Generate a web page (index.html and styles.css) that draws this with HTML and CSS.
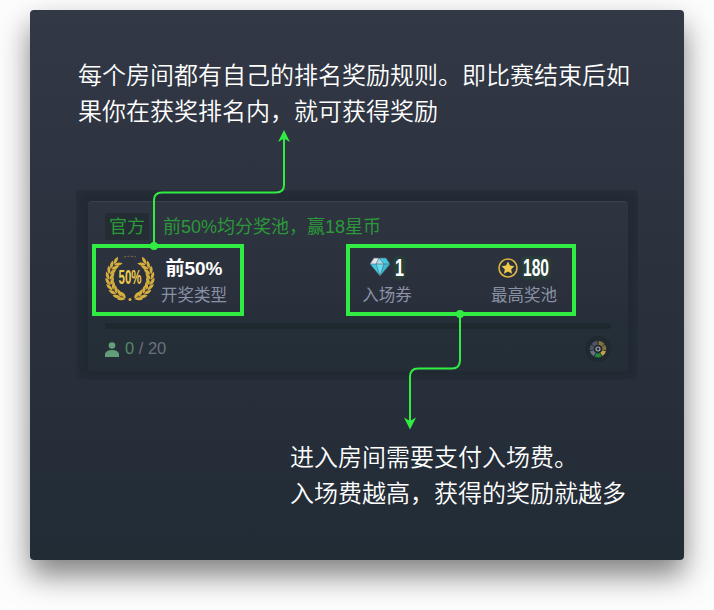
FILE: index.html
```html
<!DOCTYPE html>
<html lang="zh-CN">
<head>
<meta charset="utf-8">
<title>房间奖励规则</title>
<link rel="stylesheet" href="styles.css">
</head>
<body>
<main class="stage">
  <p class="note">每个房间都有自己的排名奖励规则。即比赛结束后如<br>果你在获奖排名内，就可获得奖励</p>

  <section class="halo">
    <div class="card">
      <div class="title-row">
        <span class="tag">官方</span>
        <span class="title">前50%均分奖池，赢18星币</span>
      </div>
      <div class="stats">
        <svg class="laurel" viewBox="-25 -25 50 50">
          <defs>
            <g id="pair">
              <path d="M-21.500 1.500C-24-1-25-4-23.500-7C-20.500-4-20-1.500-21.500 1.500Z"/>
              <path d="M-20.500 1.500C-21-2-18.500-4.500-15.500-5.500C-15.500-2-17 .5-20.500 1.500Z"/>
            </g>
            <g id="branch">
              <use href="#pair" transform="rotate(44)"/>
              <use href="#pair" transform="rotate(29)"/>
              <use href="#pair" transform="rotate(14)"/>
              <use href="#pair" transform="rotate(-1)"/>
              <use href="#pair" transform="rotate(-16)"/>
              <use href="#pair" transform="rotate(-31)"/>
              <use href="#pair" transform="rotate(-46)"/>
              <use href="#pair" transform="rotate(-61)"/>
              <use href="#pair" transform="rotate(-74)"/>
            </g>
          </defs>
          <use href="#branch"/>
          <use href="#branch" transform="scale(-1 1)"/>
          <path class="arc" d="M-6-21Q0-22.500 6-21"/>
          <circle cx="0" cy="21.500" r="1.500"/>
          <text x="-11.500" y="5.500" textLength="23" lengthAdjust="spacingAndGlyphs">50%</text>
        </svg>
        <div class="stat kind">
          <strong class="kind-value">前50%</strong>
          <span class="label">开奖类型</span>
        </div>
        <div class="stat ticket">
          <div class="value">
            <svg class="gem" viewBox="0 0 20 20">
              <path fill="#3fcbe2" d="M4 1H16L20 7L10 19L0 7Z"/>
              <path fill="#e3e5ea" d="M4 1H9L6 7H0Z"/>
              <path fill="#a4dce9" d="M9 1L14 7H6Z"/>
              <path fill="#65dced" d="M6 7H14L10 19Z"/>
              <path fill="#38bdd6" d="M14 7H20L10 19Z"/>
              <path fill="none" stroke="#52616f" stroke-width=".6" d="M4 1H16L20 7L10 19L0 7ZM0 7H20M9 1L6 7L10 19L14 7L9 1"/>
            </svg>
            <svg class="digits one" viewBox="0 0 9 20"><text x="0" y="18" textLength="9" lengthAdjust="spacingAndGlyphs">1</text></svg>
          </div>
          <span class="label">入场券</span>
        </div>
        <div class="stat pool">
          <div class="value">
            <svg class="coin" viewBox="0 0 20 20">
              <circle cx="10" cy="10" r="9"/>
              <path d="M10 3.500L12 7.500L16.400 8.200L13.200 11.300L14 15.700L10 13.600L6 15.700L6.800 11.300L3.600 8.200L8 7.500Z"/>
            </svg>
            <svg class="digits many" viewBox="0 0 26 20"><text x="0" y="18" textLength="26" lengthAdjust="spacingAndGlyphs">180</text></svg>
          </div>
          <span class="label">最高奖池</span>
        </div>
      </div>
      <div class="progress"></div>
      <div class="footer">
        <svg class="person" viewBox="0 0 14 15"><circle cx="7" cy="3.500" r="3.300"/><path d="M0 15V12Q1 8 7 8Q13 8 14 12V15Z"/></svg>
        <span class="count"><b>0</b> / 20</span>
        <svg class="wheel" viewBox="-13 -13 26 26">
          <circle r="13" fill="#202830"/>
          <g fill="none" stroke-width="4">
            <path stroke="#80713d" d="M.5-6.300A6.300 6.300 0 0 1 5-3.800"/>
            <path stroke="#80713d" d="M5.400-3.200A6.300 6.300 0 0 1 6.300 1"/>
            <path stroke="#c1a347" d="M6.100 1.700A6.300 6.300 0 0 1 3.300 5.400"/>
            <path stroke="#25893a" d="M2.700 5.900A6.300 6.300 0 0 1-2.500 5.900"/>
            <path stroke="#69737d" d="M-3.200 5.400A6.300 6.300 0 0 1-6.100 1.700"/>
            <path stroke="#4e5761" d="M-6.300 1A6.300 6.300 0 0 1-5.400-3.200"/>
            <path stroke="#4e5761" d="M-5-3.800A6.300 6.300 0 0 1-.5-6.300"/>
          </g>
          <circle r="2" fill="#252d35" stroke="#a6abb5" stroke-width="1.200"/>
        </svg>
      </div>
    </div>
  </section>

  <p class="note note-fee">进入房间需要支付入场费。<br>入场费越高，获得的奖励就越多</p>

  <svg class="callouts" viewBox="30 10 654 550">
    <rect class="frame" x="94" y="246" width="148" height="68"/>
    <rect class="frame" x="348" y="246" width="226" height="68"/>
    <path class="wire" d="M154 246V200Q154 192.500 162 192.500H276Q284 192.500 284 185V135"/>
    <path class="wire" d="M460 314V360Q460 368.500 452 368.500H418Q410 368.500 410 377V424"/>
    <circle cx="154" cy="246" r="4"/>
    <circle cx="460" cy="314" r="4"/>
    <path d="M284 130L290 142L284 138.500L278 142Z"/>
    <path d="M410 429.500L416 417.500L410 421L404 417.500Z"/>
  </svg>
</main>
</body>
</html>
```
FILE: styles.css
```css
* { box-sizing: border-box; }

body {
  margin: 0;
  padding: 10px 30px 50px;
  background: #fdfdfd;
  font-family: "Liberation Sans", "Noto Sans CJK SC", sans-serif;
}

.stage {
  position: relative;
  width: 654px;
  height: 550px;
  padding-top: 46px;
  border-radius: 4px;
  background: linear-gradient(#323845, #2a313d 50%, #222c35);
  box-shadow: 0 15px 30px rgba(0, 0, 0, .5);
}

.note {
  margin: 0 0 0 48px;
  color: #fff;
  font-family: "Noto Sans CJK SC", sans-serif;
  font-size: 24px;
  font-weight: 350;
  line-height: 36px;
  white-space: nowrap;
}

.note-fee { margin: 58px 0 0 260px; }

.halo {
  width: 562px;
  height: 190px;
  margin: 62px 0 0 46px;
  padding: 11px 12px;
  background: linear-gradient(#242c36, #222b34);
  box-shadow: inset 0 0 10px #2a303c;
}

.card {
  width: 540px;
  height: 170px;
  padding: 11px 17px 0;
  border-top: 1px solid #3a414d;
  border-radius: 4px;
  background: linear-gradient(#2e3440, #292f3b 60%, #252f38 74%, #252e37);
  box-shadow: 0 0 7px #202a32;
}

.title-row {
  display: flex;
  align-items: center;
  gap: 14px;
  height: 27px;
  color: #2b9939;
  font-size: 18px;
  line-height: 29px;
}

.tag {
  width: 44px;
  height: 27px;
  border-radius: 2px;
  background: #242c34;
  text-align: center;
}

.title {
  height: 27px;
  white-space: nowrap;
}

.stats {
  display: flex;
  height: 83px;
  padding-top: 13px;
}

.laurel {
  width: 50px;
  height: 50px;
  overflow: visible;
  fill: #d6ae3d;
}

.laurel .arc {
  fill: none;
  stroke: #867542;
  stroke-dasharray: 2 1.500;
}

.laurel text {
  fill: #f0cc4d;
  font-size: 21px;
  font-weight: bold;
}

.stat {
  display: flex;
  flex-direction: column;
  align-items: center;
}

.kind { width: 68px; margin-left: 5px; }
.ticket { width: 52px; margin-left: 133px; }
.pool { width: 68px; margin-left: 77px; }

.kind-value {
  height: 30px;
  color: #fff;
  font-size: 19px;
  line-height: 31px;
  white-space: nowrap;
}

.value {
  display: flex;
  align-items: center;
  gap: 5px;
  height: 30px;
}

.label {
  color: #8992a5;
  font-size: 16.5px;
  line-height: 25px;
  white-space: nowrap;
}

.gem, .coin { width: 20px; height: 20px; }
.gem { margin-top: -2px; }
.coin { margin-left: -1px; fill: #efca4d; }
.coin circle { fill: none; stroke: #dbb740; stroke-width: 1.600; }

.digits {
  height: 20px;
  overflow: visible;
  border-radius: 3px;
  background: #293f3b;
  box-shadow: 0 0 3px 2px #293f3b;
  fill: #fff;
  font-size: 23px;
  font-weight: bold;
}

.one { width: 9px; }
.many { width: 26px; }

.progress {
  height: 6px;
  border-radius: 3px;
  background: #1f272f;
}

.footer {
  display: flex;
  align-items: center;
  height: 40px;
}

.person {
  width: 14px;
  height: 15px;
  fill: #619e79;
}

.count {
  margin: -2px 0 0 6px;
  color: #6b717c;
  font-size: 16.5px;
}

.count b { color: #55876a; font-weight: normal; }
.wheel { width: 26px; height: 26px; margin-left: auto; }

.callouts {
  position: absolute;
  inset: 0;
  width: 654px;
  height: 550px;
  fill: #31ed43;
}

.frame, .wire { fill: none; stroke: #31ed43; }
.frame { stroke-width: 4; }
.wire { stroke-width: 2; }
```
